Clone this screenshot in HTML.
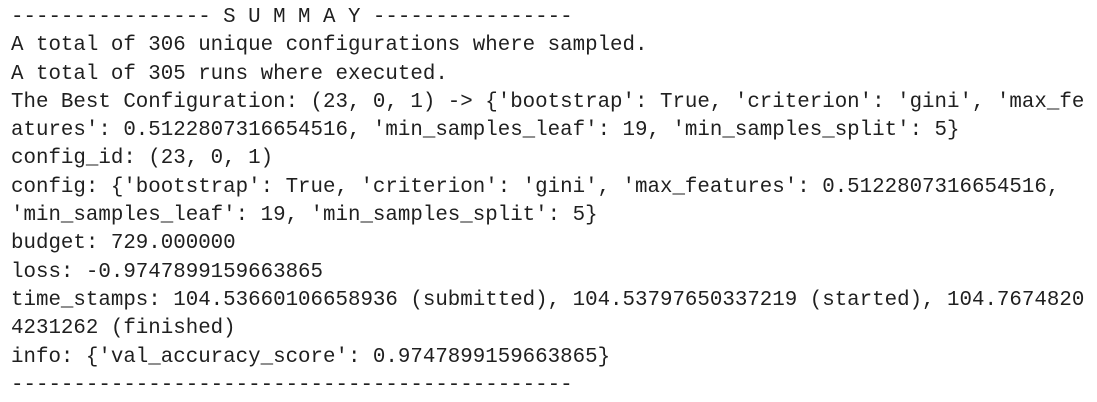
<!DOCTYPE html>
<html><head><meta charset="utf-8"><style>
html,body{margin:0;padding:0;background:#fff;}
body{width:1097px;height:402px;overflow:hidden;}
pre{margin:0;padding:4px 0 0 11px;font-family:"Liberation Mono",monospace;font-size:20.8px;line-height:28.3px;color:#1f1f1f;white-space:pre;}
</style></head><body><pre>---------------- S U M M A Y ----------------
A total of 306 unique configurations where sampled.
A total of 305 runs where executed.
The Best Configuration: (23, 0, 1) -&gt; {'bootstrap': True, 'criterion': 'gini', 'max_fe
atures': 0.5122807316654516, 'min_samples_leaf': 19, 'min_samples_split': 5}
config_id: (23, 0, 1)
config: {'bootstrap': True, 'criterion': 'gini', 'max_features': 0.5122807316654516,
'min_samples_leaf': 19, 'min_samples_split': 5}
budget: 729.000000
loss: -0.9747899159663865
time_stamps: 104.53660106658936 (submitted), 104.53797650337219 (started), 104.7674820
4231262 (finished)
info: {'val_accuracy_score': 0.9747899159663865}
---------------------------------------------</pre></body></html>
